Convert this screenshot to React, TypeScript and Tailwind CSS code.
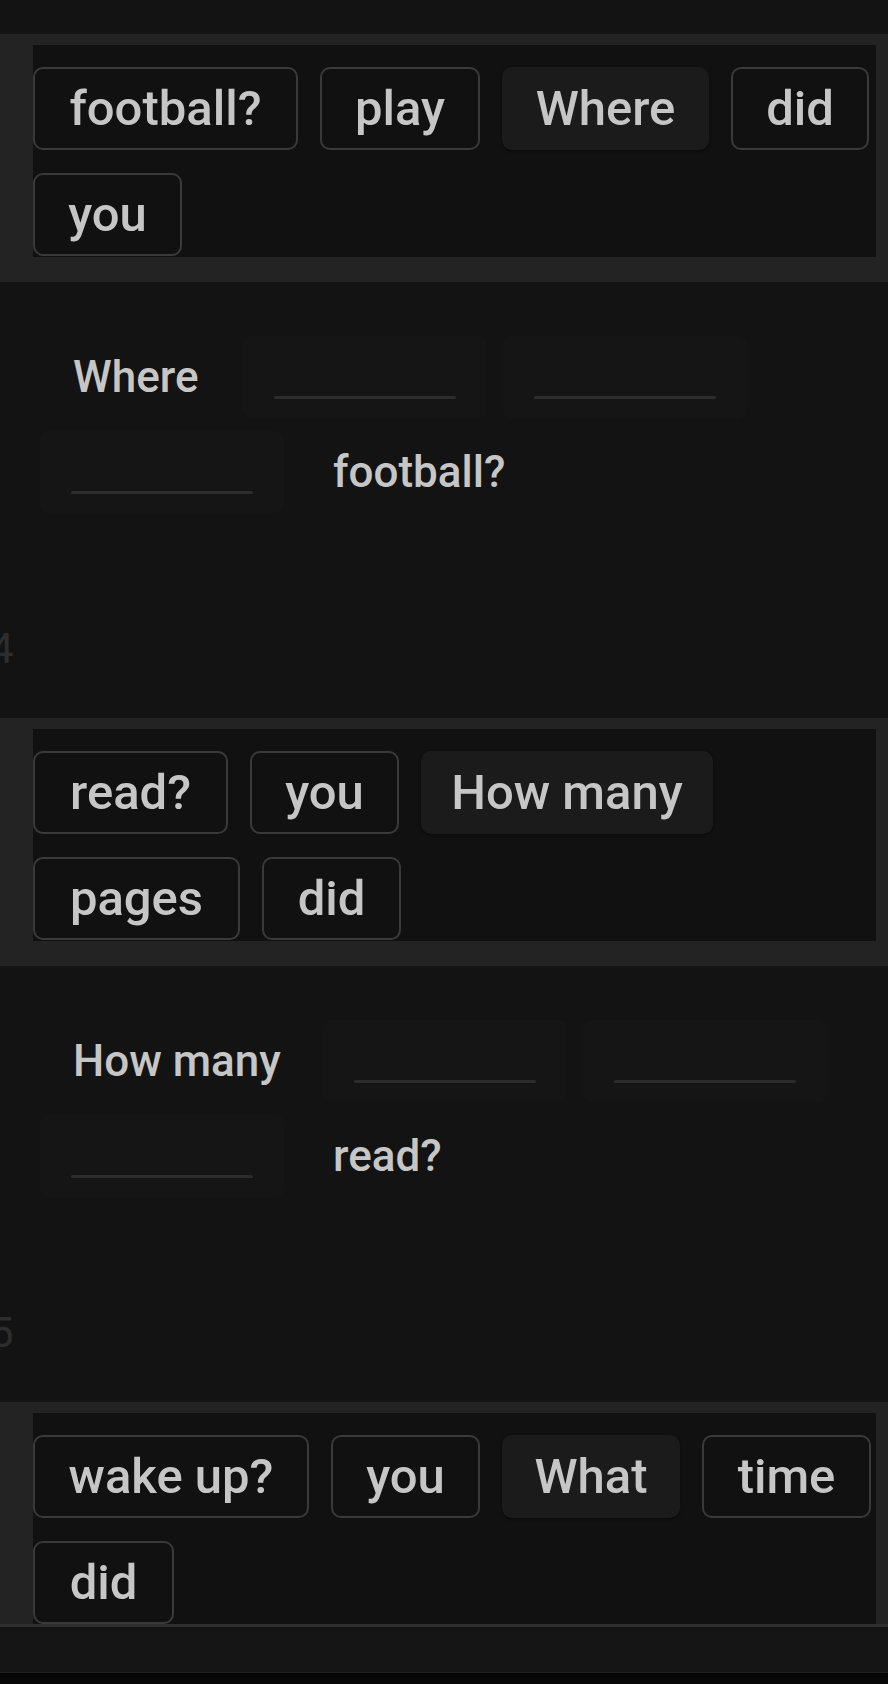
import React from "react";

type Chip = { text: string; w: string; hl?: boolean };
type Item = { kind: "word"; text: string; w?: string } | { kind: "slot" };

const q1Chips: Chip[] = [
  { text: "football?", w: "w-[265px]" },
  { text: "play", w: "w-[160px]" },
  { text: "Where", w: "w-[207px]", hl: true },
  { text: "did", w: "w-[138px]" },
  { text: "you", w: "w-[149px]" },
];
const q1Answer: Item[] = [
  { kind: "word", text: "Where", w: "w-[187px]" },
  { kind: "slot" },
  { kind: "slot" },
  { kind: "slot" },
  { kind: "word", text: "football?" },
];
const q2Chips: Chip[] = [
  { text: "read?", w: "w-[195px]" },
  { text: "you", w: "w-[149px]" },
  { text: "How many", w: "w-[292px]", hl: true },
  { text: "pages", w: "w-[207px]" },
  { text: "did", w: "w-[139px]" },
];
const q2Answer: Item[] = [
  { kind: "word", text: "How many", w: "w-[267px]" },
  { kind: "slot" },
  { kind: "slot" },
  { kind: "slot" },
  { kind: "word", text: "read?" },
];
const q3Chips: Chip[] = [
  { text: "wake up?", w: "w-[276px]" },
  { text: "you", w: "w-[149px]" },
  { text: "What", w: "w-[178px]", hl: true },
  { text: "time", w: "w-[169px]" },
  { text: "did", w: "w-[141px]" },
];

function Band({ chips }: { chips: Chip[] }) {
  return (
    <div className="bg-[#232323] pt-[11px] pb-[25px] pl-[33px] pr-[12px]">
      <div className="bg-[#111111] pt-[22px] pb-[1px] flex flex-wrap gap-x-[22px] gap-y-[23px]">
        {chips.map((c, i) => (
          <div
            key={i}
            className={
              "h-[83px] rounded-[10px] border-2 flex items-center justify-center whitespace-nowrap text-[49px] font-medium leading-none text-[#c6c6c6] " +
              c.w +
              " " +
              (c.hl
                ? "bg-[#1b1b1b] border-[#1b1b1b] shadow-[0_1px_3px_rgba(0,0,0,0.5)]"
                : "bg-[#111111] border-[#3a3a3a]")
            }
          >
            {c.text}
          </div>
        ))}
      </div>
    </div>
  );
}

function Answer({ items, num }: { items: Item[]; num: string }) {
  return (
    <div className="h-[436px] flex flex-col pt-[54px] pl-[40px] pb-[48px]">
      <div className="flex flex-wrap gap-x-4 gap-y-[13px]">
        {items.map((it, i) =>
          it.kind === "word" ? (
            <div
              key={i}
              className={
                "h-[82px] px-[33px] flex items-center whitespace-nowrap text-[44px] font-medium leading-none text-[#c6c6c6] " +
                (it.w ?? "")
              }
            >
              {it.text}
            </div>
          ) : (
            <div
              key={i}
              className="w-[244px] h-[82px] rounded-lg bg-[#151515] flex items-end justify-center pb-[19px]"
            >
              <div className="w-[182px] h-[3px] rounded-full bg-[#2c2c2c]" />
            </div>
          )
        )}
      </div>
      <div className="mt-auto -ml-[50px] h-[42px] text-[42px] leading-[42px] text-[#2d2d2d]">
        {num}
      </div>
    </div>
  );
}

export default function App() {
  return (
    <div
      className="h-[1684px] w-[888px] overflow-hidden flex flex-col bg-[#131313]"
      style={{ fontFamily: "Roboto, 'Liberation Sans', sans-serif" }}
    >
      <div className="flex-1 overflow-hidden">
        <div className="h-[34px]" />
        <Band chips={q1Chips} />
        <Answer items={q1Answer} num="4" />
        <Band chips={q2Chips} />
        <Answer items={q2Answer} num="5" />
        <Band chips={q3Chips} />
      </div>
      <div className="h-[48px] shrink-0 border-t-[3px] border-[#2f2f2f] bg-[#151515]" />
      <div className="h-[12px] shrink-0 border-t border-[#1f1f1f] bg-[#070707]" />
    </div>
  );
}
